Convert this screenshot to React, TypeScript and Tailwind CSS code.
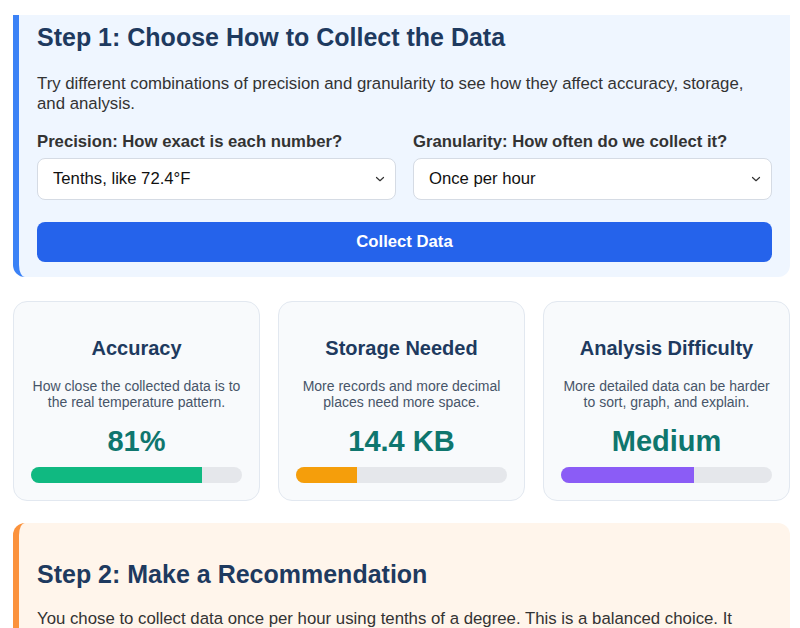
import { useState } from "react"

type metric = {
    title: string,
    description: string,
    value: string,
    percent: number,
    barColor: string
}

const metrics: metric[] = [
    {
        title: "Accuracy",
        description: "How close the collected data is to the real temperature pattern.",
        value: "81%",
        percent: 81,
        barColor: "bg-[#10b981]"
    },
    {
        title: "Storage Needed",
        description: "More records and more decimal places need more space.",
        value: "14.4 KB",
        percent: 29,
        barColor: "bg-[#f59e0b]"
    },
    {
        title: "Analysis Difficulty",
        description: "More detailed data can be harder to sort, graph, and explain.",
        value: "Medium",
        percent: 63,
        barColor: "bg-[#8b5cf6]"
    },
]

function Chevron() {
    return <svg width="10" height="6" viewBox="0 0 10 6" className="pointer-events-none absolute right-[11px] top-1/2 -translate-y-1/2">
        <path d="M1.5 1.5l3.5 3.2 3.5-3.2" fill="none" stroke="#333" strokeWidth="1.2" strokeLinecap="round" strokeLinejoin="round" />
    </svg>
}

function Picker({ label, value, options, onChange }: { label: string, value: string, options: string[], onChange: (v: string) => void }) {
    return <label className="flex flex-col">
        <span className="font-bold text-[16.7px] leading-[18px] text-[#333]">{label}</span>
        <div className="relative mt-[7px]">
            <select
                value={value}
                onChange={e => onChange(e.target.value)}
                className="h-[42px] w-full appearance-none rounded-lg border border-[#d5dbe4] bg-white pl-[15px] pr-8 text-[16.7px] text-[#111] outline-none font-[family-name:'Liberation_Sans',Arial,sans-serif]"
            >
                {options.map(o => <option key={o}>{o}</option>)}
            </select>
            <Chevron />
        </div>
    </label>
}

export default function App() {
    const [precision, setPrecision] = useState("Tenths, like 72.4°F")
    const [granularity, setGranularity] = useState("Once per hour")

    const cards = metrics.map(({ title, description, value, percent, barColor }) => {
        return <div key={title} className="flex flex-col items-center rounded-[14px] border border-[#e2e8f0] bg-[#f8fafc] px-[17px] pt-[35px] pb-[17px] text-center">
            <h3 className="text-xl leading-[23px] font-bold text-[#1e3a5f]">{title}</h3>
            <p className="mt-[18px] text-sm leading-[16px] text-[#475569]">{description}</p>
            <div className="mt-[15px] text-[29px] leading-[33px] font-bold text-[#0f766e]">{value}</div>
            <div className="mt-[9px] h-4 w-full overflow-hidden rounded-full bg-[#e5e7eb]">
                <div className={`h-full ${barColor}`} style={{ width: `${percent}%` }} />
            </div>
        </div>
    })

    return <div className="min-h-screen bg-white pt-[15px] pl-[13px] pr-[10px] font-[family-name:'Liberation_Sans',Arial,sans-serif]">
        <section className="rounded-b-xl border-l-[6px] border-[#3b82f6] bg-[#eff6ff] px-[18px] pt-[8px] pb-[15px]">
            <h2 className="text-[25px] leading-[29px] font-bold text-[#1e3a5f]">Step 1: Choose How to Collect the Data</h2>
            <p className="mt-[22px] text-[16.8px] leading-[20px] text-[#333]">
                Try different combinations of precision and granularity to see how they affect accuracy, storage, and analysis.
            </p>
            <div className="mt-[19px] grid grid-cols-2 gap-[17px]">
                <Picker
                    label="Precision: How exact is each number?"
                    value={precision}
                    onChange={setPrecision}
                    options={["Whole numbers, like 72°F", "Tenths, like 72.4°F", "Hundredths, like 72.43°F"]}
                />
                <Picker
                    label="Granularity: How often do we collect it?"
                    value={granularity}
                    onChange={setGranularity}
                    options={["Once per day", "Once per hour", "Once per minute"]}
                />
            </div>
            <button className="mt-[22px] h-10 w-full rounded-lg bg-[#2563eb] text-[16.7px] font-bold text-white">Collect Data</button>
        </section>

        <div className="mt-6 grid grid-cols-3 gap-[18px]">
            {cards}
        </div>

        <section className="mt-[22px] rounded-t-xl border-l-[6px] border-[#fb923c] bg-[#fff5eb] px-[18px] pt-[37px] pb-6">
            <h2 className="text-[25px] leading-[29px] font-bold text-[#1e3a5f]">Step 2: Make a Recommendation</h2>
            <p className="mt-[20px] text-[16.8px] leading-[20px] text-[#333]">
                You chose to collect data once per hour using tenths of a degree. This is a balanced choice. It gives enough detail to notice changes during the day without creating too much data to manage.
            </p>
        </section>
    </div>
}
